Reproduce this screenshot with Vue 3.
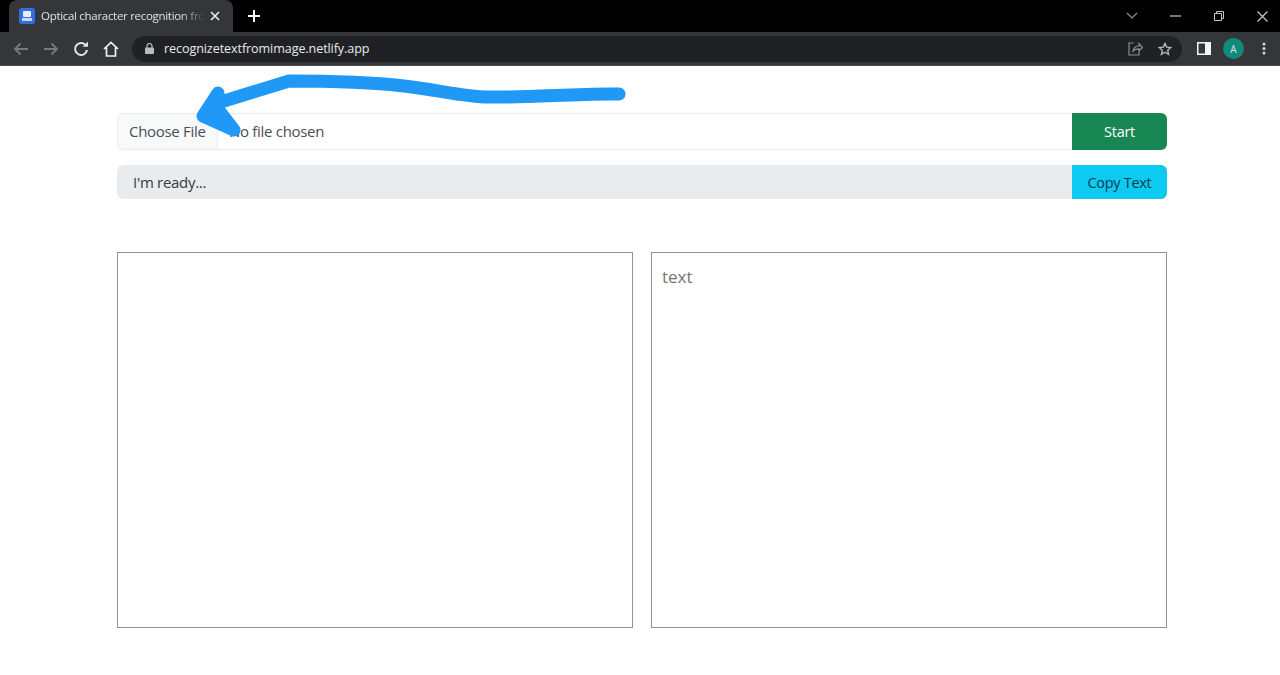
<script setup>
import { ref } from 'vue';

const status = ref("I'm ready...");
const tabTitle = 'Optical character recognition from image';
</script>

<template>
  <div class="page">
    <div class="tabstrip">
      <div class="tab">
        <svg class="favicon" width="16" height="16" viewBox="0 0 16 16">
          <rect width="16" height="16" rx="3" fill="#2f6fe0" />
          <rect x="4" y="3" width="8" height="6" rx="1" fill="#e8ecfb" />
          <rect x="3" y="10" width="10" height="3" fill="#c9d4f7" />
        </svg>
        <span class="tab-title">{{ tabTitle }}</span>
        <svg class="tab-close" width="10" height="10" viewBox="0 0 10 10">
          <path d="M1 1l8 8M9 1l-8 8" stroke="#e8eaed" stroke-width="1.7" fill="none" />
        </svg>
      </div>
      <svg class="new-tab" width="12" height="12" viewBox="0 0 12 12">
        <path d="M6 0v12M0 6h12" stroke="#fff" stroke-width="2" fill="none" />
      </svg>
      <div class="window-controls">
        <svg class="chevron" width="12" height="8" viewBox="0 0 12 8">
          <path d="M1 1l5 5 5-5" stroke="#8f9296" stroke-width="1.2" fill="none" />
        </svg>
        <svg width="11" height="2" viewBox="0 0 11 2">
          <path d="M0 1h11" stroke="#c4c6c9" stroke-width="1.2" />
        </svg>
        <svg width="10" height="10" viewBox="0 0 10 10">
          <path d="M.5 2.500h7v7h-7zM2.500 2.500v-2h7v7h-2" stroke="#c4c6c9" fill="none" />
        </svg>
        <svg width="11" height="11" viewBox="0 0 11 11">
          <path d="M.5.5l10 10M10.500.5l-10 10" stroke="#c4c6c9" stroke-width="1.2" fill="none" />
        </svg>
      </div>
    </div>

    <div class="toolbar">
      <svg class="nav-icon back" width="16" height="14" viewBox="0 0 16 14">
        <path d="M15 7H2M7.500 1.500L2 7l5.500 5.500" stroke="#77797c" stroke-width="1.800" fill="none" />
      </svg>
      <svg class="nav-icon forward" width="16" height="14" viewBox="0 0 16 14">
        <path d="M1 7h13M8.500 1.500L14 7l-5.500 5.500" stroke="#77797c" stroke-width="1.800" fill="none" />
      </svg>
      <svg class="nav-icon reload" width="16" height="16" viewBox="0 0 16 16">
        <path d="M13 4.500A6 6 0 1 0 14 9" stroke="#e4e5e7" stroke-width="2" fill="none" />
        <path d="M9.500 5.800H15V.5z" fill="#e4e5e7" />
      </svg>
      <svg class="nav-icon home" width="16" height="16" viewBox="0 0 16 16">
        <path d="M1 8l7-6.500L15 8M3.500 6.500v8.500h9V6.500" stroke="#f1f2f3" stroke-width="1.700" fill="none" />
      </svg>
      <div class="omnibox">
        <svg class="lock" width="9" height="11" viewBox="0 0 9 11">
          <rect y="4.500" width="9" height="6.500" rx="1" fill="#b9bbbe" />
          <path d="M2 5V3a2.500 2.500 0 0 1 5 0v2" stroke="#b9bbbe" stroke-width="1.200" fill="none" />
        </svg>
        <span class="url">recognizetextfromimage.netlify.app</span>
        <svg class="omni-icon share" width="15" height="14" viewBox="0 0 15 14">
          <path d="M5.500 1H1v12h10V9M5 9c.5-3 3-5 6-5V1.500L14.500 5.500 11 9V6.800C8.500 6.800 6.500 7.500 5 9z" stroke="#8d8f92" stroke-width="1.200" fill="none" />
        </svg>
        <svg class="omni-icon" width="14" height="14" viewBox="0 0 24 24">
          <path d="M12 2.500l2.900 6.300 6.900.8-5.100 4.700 1.400 6.800L12 17.600l-6.100 3.500 1.400-6.800L2.200 9.600l6.900-.8z" stroke="#b6b8ba" stroke-width="2.400" fill="none" />
        </svg>
      </div>
      <svg class="side-panel" width="14" height="13" viewBox="0 0 14 13">
        <rect width="14" height="13" fill="#f4f4f5" />
        <rect x="1.500" y="1.500" width="6.500" height="10" fill="#35363a" />
      </svg>
      <div class="avatar">A</div>
      <svg class="menu" width="4" height="13" viewBox="0 0 4 13">
        <circle cx="2" cy="2" r="1.500" fill="#d5d6d8" />
        <circle cx="2" cy="6.500" r="1.500" fill="#d5d6d8" />
        <circle cx="2" cy="11" r="1.500" fill="#d5d6d8" />
      </svg>
    </div>

    <main class="content">
      <div class="file-row">
        <div class="file-input">
          <span class="file-btn">Choose File</span>
          <span class="file-name">No file chosen</span>
        </div>
        <button class="btn btn-start">Start</button>
      </div>

      <div class="status-row">
        <div class="status">{{ status }}</div>
        <button class="btn btn-copy">Copy Text</button>
      </div>

      <div class="panes">
        <div class="pane"></div>
        <div class="pane pane-text">text</div>
      </div>

      <!-- hand drawn annotation on top of the screenshot -->
      <svg class="scribble" width="450" height="76" viewBox="0 0 450 76">
        <path
          d="M440 26C400 25 350 30 310 29C285 29 260 22 225 18C190 14 150 13 110 13L45 33L30 41"
          stroke="#1f98f6"
          stroke-width="13"
          stroke-linecap="round"
          stroke-linejoin="round"
          fill="none"
        />
        <path
          d="M39 25L24 48L55 62L38 40z"
          fill="#1f98f6"
          stroke="#1f98f6"
          stroke-width="13"
          stroke-linejoin="round"
        />
      </svg>
    </main>
  </div>
</template>

<style scoped>
.page {
  width: 1280px;
  height: 675px;
  overflow: hidden;
  background: #fff;
  font-family: "Open Sans", "Noto Sans", sans-serif;
}

.tabstrip {
  height: 32px;
  background: #000;
  display: flex;
  align-items: flex-end;
  padding-left: 9px;
}

.tab {
  width: 224px;
  height: 32px;
  box-sizing: border-box;
  background: #35363a;
  border-radius: 8px 8px 0 0;
  display: flex;
  align-items: center;
  padding: 0 10px;
}

.favicon {
  flex-shrink: 0;
}

.tab-title {
  margin-left: 6px;
  margin-bottom: 1px;
  width: 164px;
  overflow: hidden;
  white-space: nowrap;
  font-size: 11.500px;
  letter-spacing: -0.3px;
  color: #dfe1e5;
  /* chrome fades long tab titles instead of an ellipsis */
  -webkit-mask-image: linear-gradient(to right, #000 85%, transparent 100%);
  mask-image: linear-gradient(to right, #000 85%, transparent 100%);
}

.tab-close {
  margin-left: 5px;
  flex-shrink: 0;
}

.new-tab {
  margin: 0 0 10px 15px;
}

.window-controls {
  margin-left: auto;
  height: 32px;
  display: flex;
  align-items: center;
  gap: 33px;
  padding-right: 12px;
}

.chevron {
  margin-right: -1px;
}

.toolbar {
  height: 34px;
  background: #35363a;
  border-bottom: 1px solid #4a4b4e;
  box-sizing: border-box;
  display: flex;
  align-items: center;
  padding-left: 13px;
}

.nav-icon {
  flex-shrink: 0;
}

.forward,
.reload,
.home {
  margin-left: 14px;
}

.omnibox {
  width: 1050px;
  height: 26px;
  margin-left: 13px;
  background: #202124;
  border-radius: 13px;
  display: flex;
  align-items: center;
  padding: 0 10px 0 13px;
  box-sizing: border-box;
}

.url {
  margin-left: 10px;
  font-size: 12.600px;
  letter-spacing: -0.1px;
  color: #e8eaed;
}

.omni-icon {
  margin-left: 15px;
}

.share {
  margin-left: auto;
}

.side-panel {
  margin-left: 15px;
}

.avatar {
  width: 21px;
  height: 21px;
  margin-left: 12px;
  border-radius: 50%;
  background: #12897b;
  color: #cfe8e4;
  font-size: 10px;
  display: flex;
  align-items: center;
  justify-content: center;
}

.menu {
  margin-left: 18px;
}

.content {
  position: relative;
  width: 1050px;
  margin-left: 117px;
  padding-top: 47px;
  color: #212529;
}

.file-row,
.status-row {
  display: flex;
}

.file-row {
  height: 37px;
}

.status-row {
  height: 34px;
  margin-top: 15px;
}

.file-input {
  flex: 1;
  display: flex;
  align-items: center;
  box-sizing: border-box;
  border: 1px solid #e6eef0;
  border-right: 0;
  border-radius: 6px 0 0 6px;
  font-size: 15px;
  letter-spacing: -0.3px;
  color: #495057;
}

.file-btn {
  height: 100%;
  display: flex;
  align-items: center;
  padding: 0 11px 1px;
  width: 100px;
  box-sizing: border-box;
  background: #f8f9fa;
  border-right: 1px solid #e6eef0;
  border-radius: 6px 0 0 6px;
  white-space: nowrap;
}

.file-name {
  margin-left: 11px;
  margin-bottom: 1px;
}

.status {
  flex: 1;
  display: flex;
  align-items: center;
  padding: 0 0 1px 16px;
  background: #e9ecef;
  border-radius: 6px 0 0 6px;
  font-size: 15px;
  letter-spacing: -0.3px;
  color: #343a40;
}

.btn {
  width: 95px;
  border: 0;
  padding: 0;
  border-radius: 0 6px 6px 0;
  font-family: inherit;
  font-size: 14.500px;
  letter-spacing: -0.3px;
}

.btn-start {
  background: #198754;
  color: #fff;
}

.btn-copy {
  background: #0dcaf0;
  color: #0b3b52;
}

.panes {
  margin-top: 53px;
  display: flex;
  gap: 18px;
}

.pane {
  width: 516px;
  height: 376px;
  box-sizing: border-box;
  border: 1px solid #939393;
}

.pane-text {
  padding: 12px 10px;
  font-size: 17px;
  line-height: 24px;
  color: #757575;
}

.scribble {
  position: absolute;
  left: 62px;
  top: 2px;
  pointer-events: none;
}
</style>
